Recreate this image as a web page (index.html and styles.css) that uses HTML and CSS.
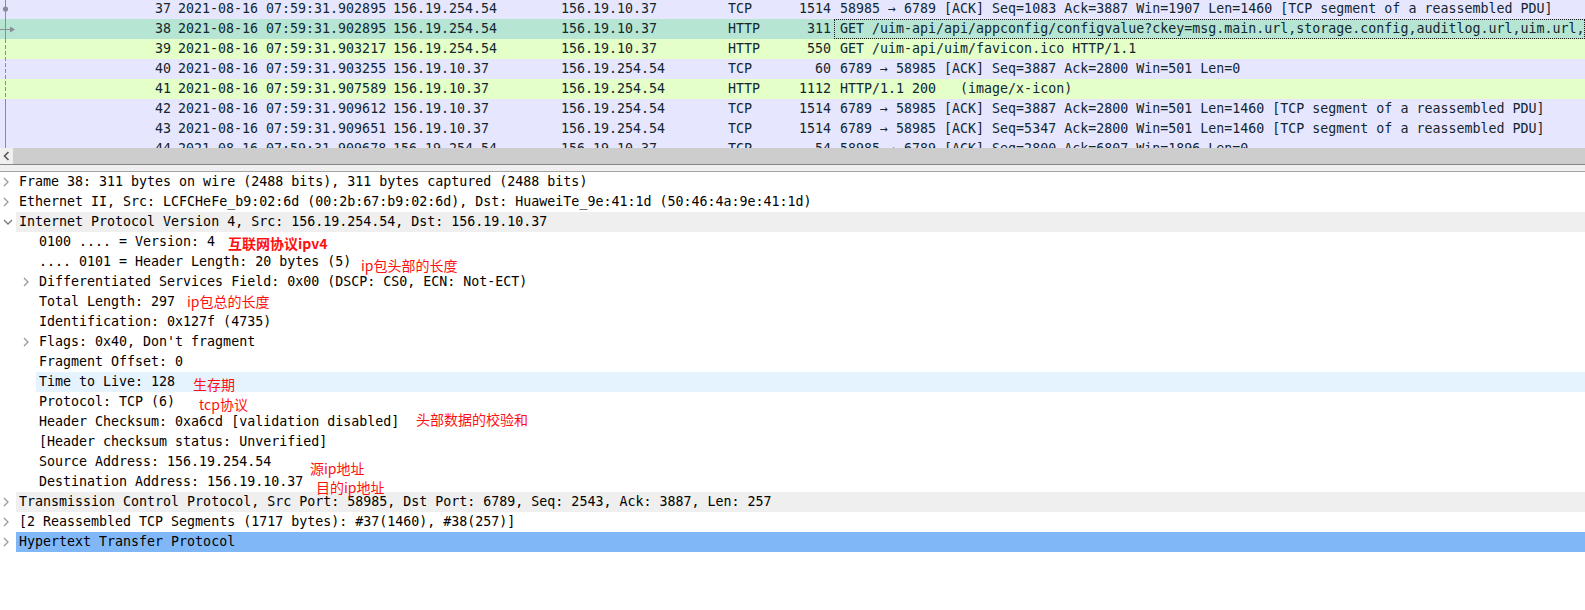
FILE: index.html
```html
<!DOCTYPE html>
<html>
<head>
<meta charset="utf-8">
<link rel="stylesheet" href="styles.css">
</head>
<body>
<div class="app">
  <div class="packets">
    <svg class="related" width="16" height="148" viewBox="0 0 16 148">
      <line x1="5.5" y1="0" x2="5.5" y2="39" stroke="#8c8c98" stroke-width="1"/>
      <circle cx="5.5" cy="9" r="2.6" fill="#8c8c98"/>
      <line x1="0" y1="29.5" x2="11" y2="29.5" stroke="#8c8c98" stroke-width="1"/>
      <polygon points="10,26.5 15,29.5 10,32.5" fill="#8c8c98"/>
      <line x1="5.5" y1="39" x2="5.5" y2="99" stroke="#8c8c98" stroke-width="1" stroke-dasharray="4 2"/>
      <line x1="5.5" y1="99" x2="5.5" y2="148" stroke="#8c8c98" stroke-width="1"/>
    </svg>
    <div class="plist">
      <div class="prow tcp"><span class="c-no">37</span><span class="c-time">2021-08-16 07:59:31.902895</span><span class="c-src">156.19.254.54</span><span class="c-dst">156.19.10.37</span><span class="c-proto">TCP</span><span class="c-len">1514</span><span class="c-info">58985 → 6789 [ACK] Seq=1083 Ack=3887 Win=1907 Len=1460 [TCP segment of a reassembled PDU]</span></div>
      <div class="prow sel"><span class="c-no">38</span><span class="c-time">2021-08-16 07:59:31.902895</span><span class="c-src">156.19.254.54</span><span class="c-dst">156.19.10.37</span><span class="c-proto">HTTP</span><span class="c-len">311</span><span class="c-info focus">GET /uim-api/api/appconfig/configvalue?ckey=msg.main.url,storage.config,auditlog.url,uim.url,nas.url,file.url HTTP/1.1</span></div>
      <div class="prow http"><span class="c-no">39</span><span class="c-time">2021-08-16 07:59:31.903217</span><span class="c-src">156.19.254.54</span><span class="c-dst">156.19.10.37</span><span class="c-proto">HTTP</span><span class="c-len">550</span><span class="c-info">GET /uim-api/uim/favicon.ico HTTP/1.1</span></div>
      <div class="prow tcp"><span class="c-no">40</span><span class="c-time">2021-08-16 07:59:31.903255</span><span class="c-src">156.19.10.37</span><span class="c-dst">156.19.254.54</span><span class="c-proto">TCP</span><span class="c-len">60</span><span class="c-info">6789 → 58985 [ACK] Seq=3887 Ack=2800 Win=501 Len=0</span></div>
      <div class="prow http"><span class="c-no">41</span><span class="c-time">2021-08-16 07:59:31.907589</span><span class="c-src">156.19.10.37</span><span class="c-dst">156.19.254.54</span><span class="c-proto">HTTP</span><span class="c-len">1112</span><span class="c-info">HTTP/1.1 200   (image/x-icon)</span></div>
      <div class="prow tcp"><span class="c-no">42</span><span class="c-time">2021-08-16 07:59:31.909612</span><span class="c-src">156.19.10.37</span><span class="c-dst">156.19.254.54</span><span class="c-proto">TCP</span><span class="c-len">1514</span><span class="c-info">6789 → 58985 [ACK] Seq=3887 Ack=2800 Win=501 Len=1460 [TCP segment of a reassembled PDU]</span></div>
      <div class="prow tcp"><span class="c-no">43</span><span class="c-time">2021-08-16 07:59:31.909651</span><span class="c-src">156.19.10.37</span><span class="c-dst">156.19.254.54</span><span class="c-proto">TCP</span><span class="c-len">1514</span><span class="c-info">6789 → 58985 [ACK] Seq=5347 Ack=2800 Win=501 Len=1460 [TCP segment of a reassembled PDU]</span></div>
      <div class="prow tcp"><span class="c-no">44</span><span class="c-time">2021-08-16 07:59:31.909678</span><span class="c-src">156.19.254.54</span><span class="c-dst">156.19.10.37</span><span class="c-proto">TCP</span><span class="c-len">54</span><span class="c-info">58985 → 6789 [ACK] Seq=2800 Ack=6807 Win=1896 Len=0</span></div>
    </div>
  </div>
  <div class="hscroll">
    <div class="hs-arrow"><svg width="7" height="10" viewBox="0 0 7 10"><polyline points="5.5,1 1.5,5 5.5,9" fill="none" stroke="#555" stroke-width="1.6"/></svg></div>
    <div class="hs-thumb"></div>
  </div>
  <div class="splitter"></div>
  <div class="details">
    <div class="drow l0"><span class="exp"><svg width="6" height="10" viewBox="0 0 6 10"><polyline points="1,1 5,5 1,9" fill="none" stroke="#999" stroke-width="1.3"/></svg></span><span class="dtext">Frame 38: 311 bytes on wire (2488 bits), 311 bytes captured (2488 bits)</span></div>
    <div class="drow l0"><span class="exp"><svg width="6" height="10" viewBox="0 0 6 10"><polyline points="1,1 5,5 1,9" fill="none" stroke="#999" stroke-width="1.3"/></svg></span><span class="dtext">Ethernet II, Src: LCFCHeFe_b9:02:6d (00:2b:67:b9:02:6d), Dst: HuaweiTe_9e:41:1d (50:46:4a:9e:41:1d)</span></div>
    <div class="drow l0 band"><span class="exp"><svg width="10" height="6" viewBox="0 0 10 6"><polyline points="1,1 5,5 9,1" fill="none" stroke="#777" stroke-width="1.3"/></svg></span><span class="dtext">Internet Protocol Version 4, Src: 156.19.254.54, Dst: 156.19.10.37</span></div>
    <div class="drow l1"><span class="exp"></span><span class="dtext">0100 .... = Version: 4</span></div>
    <div class="drow l1"><span class="exp"></span><span class="dtext">.... 0101 = Header Length: 20 bytes (5)</span></div>
    <div class="drow l1"><span class="exp"><svg width="6" height="10" viewBox="0 0 6 10"><polyline points="1,1 5,5 1,9" fill="none" stroke="#999" stroke-width="1.3"/></svg></span><span class="dtext">Differentiated Services Field: 0x00 (DSCP: CS0, ECN: Not-ECT)</span></div>
    <div class="drow l1"><span class="exp"></span><span class="dtext">Total Length: 297</span></div>
    <div class="drow l1"><span class="exp"></span><span class="dtext">Identification: 0x127f (4735)</span></div>
    <div class="drow l1"><span class="exp"><svg width="6" height="10" viewBox="0 0 6 10"><polyline points="1,1 5,5 1,9" fill="none" stroke="#999" stroke-width="1.3"/></svg></span><span class="dtext">Flags: 0x40, Don't fragment</span></div>
    <div class="drow l1"><span class="exp"></span><span class="dtext">Fragment Offset: 0</span></div>
    <div class="drow l1 hover"><span class="exp"></span><span class="dtext">Time to Live: 128</span></div>
    <div class="drow l1"><span class="exp"></span><span class="dtext">Protocol: TCP (6)</span></div>
    <div class="drow l1"><span class="exp"></span><span class="dtext">Header Checksum: 0xa6cd [validation disabled]</span></div>
    <div class="drow l1"><span class="exp"></span><span class="dtext">[Header checksum status: Unverified]</span></div>
    <div class="drow l1"><span class="exp"></span><span class="dtext">Source Address: 156.19.254.54</span></div>
    <div class="drow l1"><span class="exp"></span><span class="dtext">Destination Address: 156.19.10.37</span></div>
    <div class="drow l0 band"><span class="exp"><svg width="6" height="10" viewBox="0 0 6 10"><polyline points="1,1 5,5 1,9" fill="none" stroke="#999" stroke-width="1.3"/></svg></span><span class="dtext">Transmission Control Protocol, Src Port: 58985, Dst Port: 6789, Seq: 2543, Ack: 3887, Len: 257</span></div>
    <div class="drow l0"><span class="exp"><svg width="6" height="10" viewBox="0 0 6 10"><polyline points="1,1 5,5 1,9" fill="none" stroke="#999" stroke-width="1.3"/></svg></span><span class="dtext">[2 Reassembled TCP Segments (1717 bytes): #37(1460), #38(257)]</span></div>
    <div class="drow l0 selected"><span class="exp"><svg width="6" height="10" viewBox="0 0 6 10"><polyline points="1,1 5,5 1,9" fill="none" stroke="#999" stroke-width="1.3"/></svg></span><span class="dtext">Hypertext Transfer Protocol</span></div>

    <span class="note bold n1">互联网协议ipv4</span>
    <span class="note n2">ip包头部的长度</span>
    <span class="note n3">ip包总的长度</span>
    <span class="note n4">生存期</span>
    <span class="note n5">tcp协议</span>
    <span class="note n6">头部数据的校验和</span>
    <span class="note n7">源ip地址</span>
    <span class="note n8">目的ip地址</span>
  </div>
</div>
</body>
</html>
```

FILE: styles.css
```css
html, body {
  margin: 0;
  padding: 0;
  background: #ffffff;
}
body {
  width: 1585px;
  height: 610px;
  overflow: hidden;
  font-family: "DejaVu Sans Mono", "Liberation Mono", monospace;
  font-size: 13.3px;
}
.app {
  display: flex;
  flex-direction: column;
  width: 1585px;
  height: 610px;
}

/* packet list */
.packets {
  position: relative;
  height: 148px;
  overflow: hidden;
  background: #e7e6ff;
}
.related {
  position: absolute;
  left: 0;
  top: 0;
  z-index: 2;
}
.plist {
  margin-top: -1px;
}
.prow {
  display: grid;
  grid-template-columns: 175px 215px 168px 167px 55px 54px 1fr;
  height: 20px;
  line-height: 20px;
  color: #12272e;
  white-space: pre;
}
.prow > span {
  overflow: hidden;
  box-sizing: border-box;
}
.prow.tcp { background: #e7e6ff; }
.prow.http { background: #e4ffc7; }
.prow.sel { background: #b6e5d3; }
.c-no { text-align: right; padding-right: 4px; }
.c-time, .c-src, .c-dst, .c-proto { padding-left: 3px; }
.c-len { text-align: right; padding-right: 3px; }
.c-info {
  padding-left: 5px;
  border: 1px solid transparent;
  line-height: 18px;
}
.c-info.focus {
  border: 1px dotted #1a1a1a;
}

/* horizontal scrollbar */
.hscroll {
  display: flex;
  height: 16px;
  background: #f0f0f0;
}
.hs-arrow {
  width: 12px;
  display: flex;
  align-items: center;
  justify-content: center;
  background: #f0f0f0;
}
.hs-thumb {
  flex: 1;
  margin-left: 1px;
  background: #cdcdcd;
}

/* splitter */
.splitter {
  height: 6px;
  background: #f0f0f0;
  border-top: 1px solid #878787;
  border-bottom: 1px solid #a3a3a3;
}

/* details tree */
.details {
  position: relative;
  flex: 1;
  background: #ffffff;
  color: #000000;
}
.drow {
  display: flex;
  height: 20px;
  line-height: 20px;
  white-space: pre;
}
.drow.l1 { padding-left: 20px; }
.exp {
  width: 16px;
  flex: none;
  display: flex;
  align-items: center;
  padding-left: 3px;
  box-sizing: border-box;
}
.dtext {
  flex: 1;
  padding-left: 3px;
}
.drow.band .dtext { background: #efefef; }
.drow.hover .dtext { background: #e5f3ff; }
.drow.selected .dtext { background: #80b8f7; }

/* red annotations */
.note {
  position: absolute;
  font-family: "Noto Sans CJK SC", "Noto Sans", sans-serif;
  font-size: 14px;
  line-height: 20px;
  color: #ff1010;
  white-space: nowrap;
}
.note.bold { font-weight: 700; }
.n1 { left: 228px; top: 61px; }
.n2 { left: 361px; top: 83px; }
.n3 { left: 187px; top: 119px; }
.n4 { left: 193px; top: 202px; }
.n5 { left: 199px; top: 222px; }
.n6 { left: 416px; top: 237px; }
.n7 { left: 310px; top: 286px; }
.n8 { left: 316px; top: 305px; }
```
